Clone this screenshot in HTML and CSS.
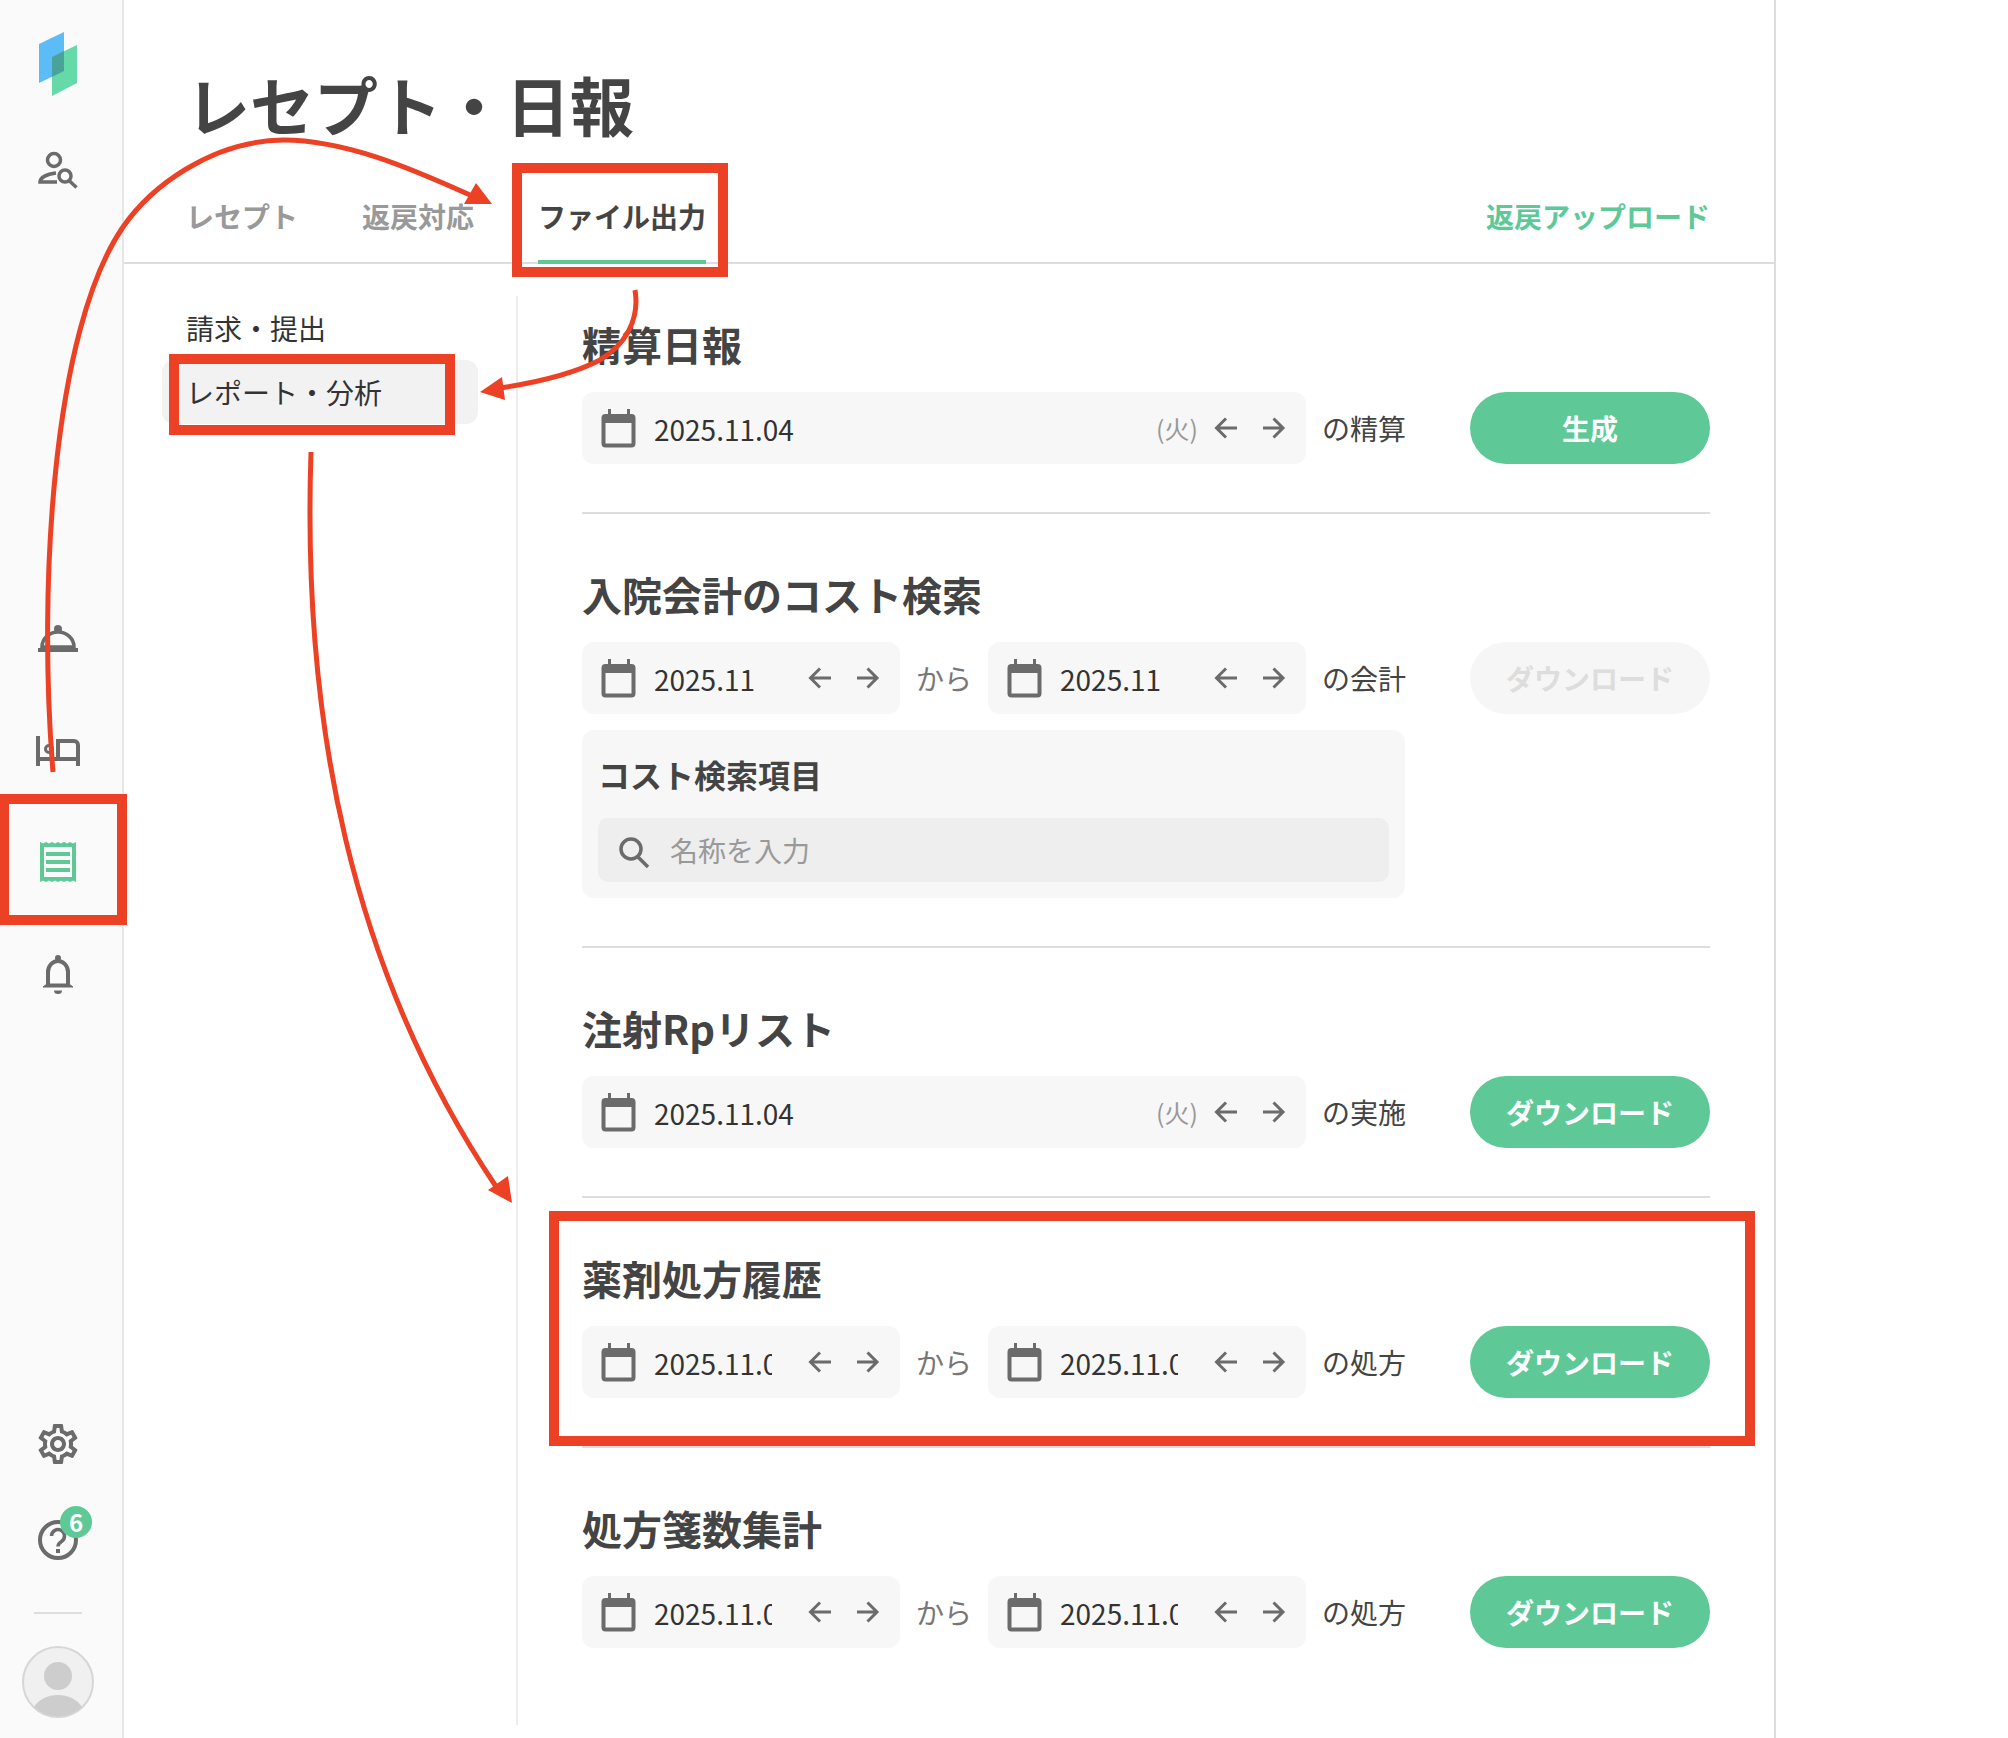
FILE: index.html
```html
<!DOCTYPE html>
<html lang="ja">
<head>
    <meta charset="UTF-8">
    <title>レセプト・日報</title>
    <link rel="stylesheet" href="styles.css">
</head>
<body>
    <svg class="defs" width="0" height="0">
        <symbol id="i-cal" viewBox="0 0 48 48">
            <path d="M14 5h3v9h-3zM33 5h3v9h-3z" fill="#6b6b6b"/>
            <rect x="9.500" y="12" width="30" height="29.500" rx="2" fill="none" stroke="#6b6b6b" stroke-width="4"/>
            <rect x="9.500" y="11" width="30" height="8" fill="#6b6b6b"/>
        </symbol>
        <symbol id="i-left" viewBox="0 0 48 48">
            <path d="M35 24H15M24 14.500L14.500 24 24 33.500" fill="none" stroke="#6b6b6b" stroke-width="3"/>
        </symbol>
        <symbol id="i-right" viewBox="0 0 48 48">
            <path d="M13 24h20M23.500 14.500L33 24l-9.500 9.500" fill="none" stroke="#6b6b6b" stroke-width="3"/>
        </symbol>
    </svg>

    <div class="sidebar">
        <div class="logo">
            <svg width="116" height="64" viewBox="0 0 116 64">
                <polygon points="39,12 64,0 64,39 39,51" fill="#5bbcf8"/>
                <polygon points="52,25 77,13 77,51 52,64" fill="#66d9a8"/>
                <polygon points="52,25 64,19 64,39 52,45" fill="#4aa39b"/>
            </svg>
        </div>
        <div class="nav-group nav-top">
            <div class="nav-item">
                <svg class="nav-icon" viewBox="0 0 48 48" fill="none" stroke="#6b6b6b" stroke-width="3.500">
                    <circle cx="20" cy="14" r="6.500"/>
                    <path d="M22 27C12 28 6 32 6 36h17"/>
                    <circle cx="31" cy="30" r="6"/>
                    <path d="M35 34.500l7.500 7"/>
                </svg>
            </div>
        </div>
        <div class="nav-group nav-mid">
            <div class="nav-item">
                <svg class="nav-icon" viewBox="0 0 48 48" fill="none" stroke="#6b6b6b" stroke-width="3.500">
                    <circle cx="24" cy="13" r="4" fill="#6b6b6b" stroke="none"/>
                    <path d="M8 31a16 15 0 0 1 32 0z"/>
                    <rect x="4" y="32" width="40" height="4" fill="#6b6b6b" stroke="none"/>
                </svg>
            </div>
            <div class="nav-item">
                <svg class="nav-icon" viewBox="0 0 48 48" fill="none" stroke="#6b6b6b" stroke-width="4">
                    <path d="M4 8v30M44 38V17a4 4 0 0 0-4-4H24v18M4 31h40"/>
                    <circle cx="15" cy="21" r="3.500" stroke-width="3"/>
                </svg>
            </div>
            <div class="nav-item">
                <svg class="nav-icon" viewBox="0 0 48 48">
                    <path d="M6 2l3 1.500 3-1.500 3 1.500 3-1.500 3 1.500 3-1.500 3 1.500 3-1.500 3 1.500 3-1.500 3 1.500 3-1.500v40l-3-1.500-3 1.500-3-1.500-3 1.500-3-1.500-3 1.500-3-1.500-3 1.500-3-1.500-3 1.500-3-1.500-3 1.500z" fill="#5ec997"/>
                    <rect x="10" y="7" width="28" height="30" fill="#fafafa"/>
                    <path d="M12 12h24v4H12zM12 20h24v4H12zM12 28h24v4H12z" fill="#5ec997"/>
                </svg>
            </div>
            <div class="nav-item">
                <svg class="nav-icon" viewBox="0 0 48 48" fill="none" stroke="#6b6b6b" stroke-width="4">
                    <circle cx="24" cy="6" r="3" fill="#6b6b6b" stroke="none"/>
                    <path d="M14 33V20a10 11 0 0 1 20 0v13"/>
                    <path d="M9 35l4-3h22l4 3z" fill="#6b6b6b" stroke-width="1"/>
                    <path d="M20 38.500h8a4 3.500 0 0 1-8 0z" fill="#6b6b6b" stroke="none"/>
                </svg>
            </div>
        </div>
        <div class="nav-group nav-bottom">
            <div class="nav-item nav-item-gear">
                <svg class="nav-icon" viewBox="0 0 24 24">
                    <path fill="#6b6b6b" d="M19.430 12.980c.040-.320.070-.640.070-.980 0-.340-.030-.660-.070-.980l2.110-1.650c.190-.150.240-.420.120-.640l-2-3.460c-.090-.160-.260-.250-.440-.250-.060 0-.120.010-.170.030l-2.490 1c-.520-.400-1.080-.730-1.690-.980l-.380-2.650C14.460 2.180 14.250 2 14 2h-4c-.250 0-.460.180-.490.420l-.380 2.650c-.610.250-1.170.590-1.690.980l-2.490-1c-.060-.020-.120-.030-.180-.030-.170 0-.340.090-.430.250l-2 3.460c-.130.220-.070.490.120.640l2.110 1.650c-.040.320-.070.650-.070.980 0 .330.030.660.070.980l-2.110 1.650c-.190.150-.240.420-.12.640l2 3.460c.090.160.260.250.440.250.060 0 .120-.010.170-.030l2.490-1c.520.400 1.080.730 1.690.980l.380 2.650c.030.240.240.420.490.420h4c.250 0 .460-.180.490-.420l.380-2.650c.610-.250 1.170-.590 1.690-.980l2.490 1c.060.020.120.030.180.030.170 0 .340-.090.430-.250l2-3.460c.120-.220.070-.490-.120-.640l-2.110-1.650zm-1.980-1.710c.040.310.050.520.050.730 0 .210-.020.430-.050.730l-.140 1.130.890.700 1.080.84-.700 1.210-1.270-.510-1.040-.420-.900.680c-.430.320-.840.560-1.250.73l-1.060.43-.160 1.130-.200 1.350h-1.400l-.190-1.350-.160-1.130-1.060-.43c-.430-.180-.830-.410-1.230-.71l-.910-.700-1.060.43-1.270.510-.700-1.210 1.080-.84.890-.700-.140-1.130c-.030-.310-.050-.54-.05-.74s.02-.43.05-.73l.14-1.130-.89-.700-1.080-.84.700-1.210 1.270.51 1.040.42.900-.68c.43-.32.840-.56 1.250-.73l1.060-.43.160-1.130.200-1.350h1.390l.190 1.350.160 1.130 1.060.43c.43.180.83.410 1.230.71l.91.700 1.060-.43 1.270-.51.700 1.210-1.070.85-.89.700.14 1.130zM12 8c-2.210 0-4 1.790-4 4s1.790 4 4 4 4-1.790 4-4-1.790-4-4-4zm0 6c-1.100 0-2-.900-2-2s.900-2 2-2 2 .900 2 2-.900 2-2 2z"/>
                </svg>
            </div>
            <div class="nav-item nav-item-sm">
                <svg class="nav-icon" viewBox="0 0 48 48" fill="none" stroke="#6b6b6b" stroke-width="4">
                    <circle cx="24" cy="24" r="18"/>
                    <path d="M17.500 20a6.500 6.500 0 1 1 10 5.500c-2.500 1.500-3.500 2.500-3.500 5" stroke-width="3.500"/>
                    <rect x="22" y="33" width="4" height="4" fill="#6b6b6b" stroke="none"/>
                </svg>
                <span class="badge">6</span>
            </div>
            <div class="side-sep"></div>
            <div class="avatar">
                <svg width="72" height="72" viewBox="0 0 72 72">
                    <circle cx="36" cy="36" r="35" fill="#f0f0f0" stroke="#d6d6d6" stroke-width="2"/>
                    <circle cx="36" cy="30" r="14" fill="#cdcdcd"/>
                    <path d="M12 61c5-8 14-12 24-12s19 4 24 12a35 35 0 0 1-48 0z" fill="#cdcdcd"/>
                </svg>
            </div>
        </div>
    </div>

    <div class="main">
        <h1 class="page-title">レセプト・日報</h1>
        <div class="tabs">
            <a class="tab">レセプト</a>
            <a class="tab">返戻対応</a>
            <a class="tab active">ファイル出力</a>
            <a class="tab-link">返戻アップロード</a>
        </div>
        <div class="body">
            <div class="subnav">
                <div class="subnav-item">請求・提出</div>
                <div class="subnav-item selected">レポート・分析</div>
            </div>
            <div class="content">
                <div class="section">
                    <h2>精算日報</h2>
                    <div class="row">
                        <div class="date wide">
                            <svg class="ico"><use href="#i-cal"/></svg>
                            <span class="date-text">2025.11.04</span>
                            <span class="weekday">(火)</span>
                            <svg class="ico"><use href="#i-left"/></svg>
                            <svg class="ico"><use href="#i-right"/></svg>
                        </div>
                        <span class="label">の精算</span>
                        <button class="btn">生成</button>
                    </div>
                </div>

                <div class="section">
                    <h2>入院会計のコスト検索</h2>
                    <div class="row">
                        <div class="date">
                            <svg class="ico"><use href="#i-cal"/></svg>
                            <span class="date-text">2025.11</span>
                            <svg class="ico"><use href="#i-left"/></svg>
                            <svg class="ico"><use href="#i-right"/></svg>
                        </div>
                        <span class="label muted">から</span>
                        <div class="date">
                            <svg class="ico"><use href="#i-cal"/></svg>
                            <span class="date-text">2025.11</span>
                            <svg class="ico"><use href="#i-left"/></svg>
                            <svg class="ico"><use href="#i-right"/></svg>
                        </div>
                        <span class="label">の会計</span>
                        <button class="btn disabled">ダウンロード</button>
                    </div>
                    <div class="panel">
                        <div class="panel-title">コスト検索項目</div>
                        <div class="search">
                            <svg class="ico" viewBox="0 0 48 48" fill="none" stroke="#6b6b6b" stroke-width="3.500">
                                <circle cx="21" cy="23" r="10"/>
                                <path d="M28 31l10 10"/>
                            </svg>
                            <span class="placeholder">名称を入力</span>
                        </div>
                    </div>
                </div>

                <div class="section">
                    <h2>注射Rpリスト</h2>
                    <div class="row">
                        <div class="date wide">
                            <svg class="ico"><use href="#i-cal"/></svg>
                            <span class="date-text">2025.11.04</span>
                            <span class="weekday">(火)</span>
                            <svg class="ico"><use href="#i-left"/></svg>
                            <svg class="ico"><use href="#i-right"/></svg>
                        </div>
                        <span class="label">の実施</span>
                        <button class="btn">ダウンロード</button>
                    </div>
                </div>

                <div class="section">
                    <h2>薬剤処方履歴</h2>
                    <div class="row">
                        <div class="date">
                            <svg class="ico"><use href="#i-cal"/></svg>
                            <span class="date-text">2025.11.04</span>
                            <svg class="ico"><use href="#i-left"/></svg>
                            <svg class="ico"><use href="#i-right"/></svg>
                        </div>
                        <span class="label muted">から</span>
                        <div class="date">
                            <svg class="ico"><use href="#i-cal"/></svg>
                            <span class="date-text">2025.11.04</span>
                            <svg class="ico"><use href="#i-left"/></svg>
                            <svg class="ico"><use href="#i-right"/></svg>
                        </div>
                        <span class="label">の処方</span>
                        <button class="btn">ダウンロード</button>
                    </div>
                </div>

                <div class="section last">
                    <h2>処方箋数集計</h2>
                    <div class="row">
                        <div class="date">
                            <svg class="ico"><use href="#i-cal"/></svg>
                            <span class="date-text">2025.11.04</span>
                            <svg class="ico"><use href="#i-left"/></svg>
                            <svg class="ico"><use href="#i-right"/></svg>
                        </div>
                        <span class="label muted">から</span>
                        <div class="date">
                            <svg class="ico"><use href="#i-cal"/></svg>
                            <span class="date-text">2025.11.04</span>
                            <svg class="ico"><use href="#i-left"/></svg>
                            <svg class="ico"><use href="#i-right"/></svg>
                        </div>
                        <span class="label">の処方</span>
                        <button class="btn">ダウンロード</button>
                    </div>
                </div>
            </div>
        </div>
    </div>

    <!-- 赤い注釈 -->
    <svg class="notes" width="2008" height="1738" viewBox="0 0 2008 1738" fill="none" stroke="#ec4125">
        <rect x="4" y="799" width="118" height="121" stroke-width="10"/>
        <rect x="517" y="168" width="206" height="104" stroke-width="10"/>
        <rect x="174" y="359" width="276" height="71" stroke-width="10"/>
        <rect x="554" y="1216" width="1196" height="225" stroke-width="10"/>
        <path stroke-width="5" d="M53 772C38 590 52 330 123 227C150 188 210 141 283 140C345 140 410 168 470 195"/>
        <polygon points="476,183 464,204 492,204" fill="#ec4125" stroke="none"/>
        <path stroke-width="5" d="M635 290C640 320 625 345 600 360C575 373 540 382 500 388"/>
        <polygon points="480,392 502,377 505,400" fill="#ec4125" stroke="none"/>
        <path stroke-width="5" d="M311 452C302 720 350 970 497 1188"/>
        <polygon points="512,1203 508,1176 488,1190" fill="#ec4125" stroke="none"/>
    </svg>
</body>
</html>
```

FILE: styles.css
```css
* {
    box-sizing: border-box;
}
body {
    margin: 0;
    height: 100vh;
    display: flex;
    overflow: hidden;
    background-color: #fff;
    color: #444;
    font-family: "Noto Sans CJK JP", "Noto Sans", sans-serif;
    font-size: 28px;
}
.defs {
    position: absolute;
}

/* サイドバー */
.sidebar {
    width: 124px;
    height: 100%;
    flex: none;
    display: flex;
    flex-direction: column;
    padding-right: 6px;
    background-color: #fafafa;
    border-right: 2px solid #e6e6e6;
}
.logo {
    height: 64px;
    margin-top: 32px;
    margin-right: -6px;
}
.logo svg {
    display: block;
}
.nav-top {
    margin-top: 18px;
}
.nav-mid {
    margin-top: 358px;
}
.nav-bottom {
    margin-top: auto;
    padding-bottom: 20px;
}
.nav-item {
    position: relative;
    height: 112px;
    display: flex;
    align-items: center;
    justify-content: center;
}
.nav-item-sm {
    height: 97px;
}
.nav-item-gear {
    height: 95px;
}
.nav-icon {
    width: 48px;
    height: 48px;
}
.badge {
    position: absolute;
    left: 60px;
    top: 15px;
    width: 32px;
    height: 32px;
    border-radius: 50%;
    background-color: #5ec997;
    color: #fff;
    font-size: 24px;
    font-weight: 700;
    line-height: 32px;
    text-align: center;
}
.side-sep {
    width: 48px;
    height: 2px;
    margin: 24px auto 32px;
    background-color: #ddd;
}
.avatar {
    width: 72px;
    height: 72px;
    margin: 0 auto;
}
.avatar svg {
    display: block;
}

/* メイン */
.main {
    width: 1652px;
    height: 100%;
    flex: none;
    display: flex;
    flex-direction: column;
    border-right: 2px solid #ddd;
}
.page-title {
    margin: 63px 0 37px 62px;
    font-size: 64px;
    font-weight: 700;
    line-height: 80px;
    color: #444;
}
.tabs {
    display: flex;
    gap: 64px;
    padding: 0 64px 0 62px;
    border-bottom: 2px solid #ddd;
}
.tab {
    height: 84px;
    margin-bottom: -2px;
    padding-top: 18px;
    font-weight: 700;
    line-height: 36px;
    color: #999;
}
.tab.active {
    color: #444;
    border-bottom: 4px solid #5ec997;
}
.tab-link {
    margin-left: auto;
    padding-top: 18px;
    font-weight: 700;
    line-height: 36px;
    color: #5ec997;
}
.body {
    flex: 1;
    min-height: 0;
    display: flex;
}
.subnav {
    width: 394px;
    flex: none;
    margin: 32px 0 13px;
    padding: 0 38px;
    border-right: 2px solid #eee;
}
.subnav-item {
    height: 64px;
    padding-left: 24px;
    line-height: 64px;
    color: #333;
    border-radius: 12px;
}
.subnav-item.selected {
    background-color: #f2f2f2;
}
.content {
    flex: 1;
    min-width: 0;
    padding: 0 64px;
}
.section {
    padding: 56px 0 48px;
    border-bottom: 2px solid #ddd;
}
.section.last {
    border-bottom: none;
}
.section h2 {
    margin: 0 0 24px;
    font-size: 40px;
    font-weight: 700;
    line-height: 48px;
    color: #444;
}
.row {
    display: flex;
    align-items: center;
    gap: 16px;
}
.date {
    width: 318px;
    height: 72px;
    flex: none;
    display: flex;
    align-items: center;
    padding: 0 8px 0 12px;
    background-color: #f7f7f7;
    border-radius: 12px;
}
.date.wide {
    width: 724px;
}
.ico {
    width: 48px;
    height: 48px;
    flex: none;
}
.date-text {
    flex: 1;
    min-width: 0;
    margin: 1px 24px 0 12px;
    overflow: hidden;
    white-space: nowrap;
    color: #333;
}
.weekday {
    margin-right: 4px;
    font-size: 25px;
    color: #999;
}
.label {
    white-space: nowrap;
}
.muted {
    color: #777;
}
.btn {
    width: 240px;
    height: 72px;
    margin-left: auto;
    padding: 0;
    border: none;
    border-radius: 36px;
    background-color: #5ec997;
    color: #fff;
    font-family: inherit;
    font-size: 28px;
    font-weight: 700;
}
.btn.disabled {
    background-color: #f6f6f6;
    color: #ddd;
}
.panel {
    width: 823px;
    margin-top: 16px;
    padding: 26px 16px 16px;
    background-color: #f7f7f7;
    border-radius: 12px;
}
.panel-title {
    margin-bottom: 26px;
    font-size: 32px;
    font-weight: 700;
    line-height: 36px;
}
.search {
    height: 64px;
    display: flex;
    align-items: center;
    padding-left: 12px;
    background-color: #eee;
    border-radius: 10px;
}
.placeholder {
    margin-left: 12px;
    color: #999;
}

/* 注釈 */
.notes {
    position: absolute;
    left: 0;
    top: 0;
    pointer-events: none;
}
```
